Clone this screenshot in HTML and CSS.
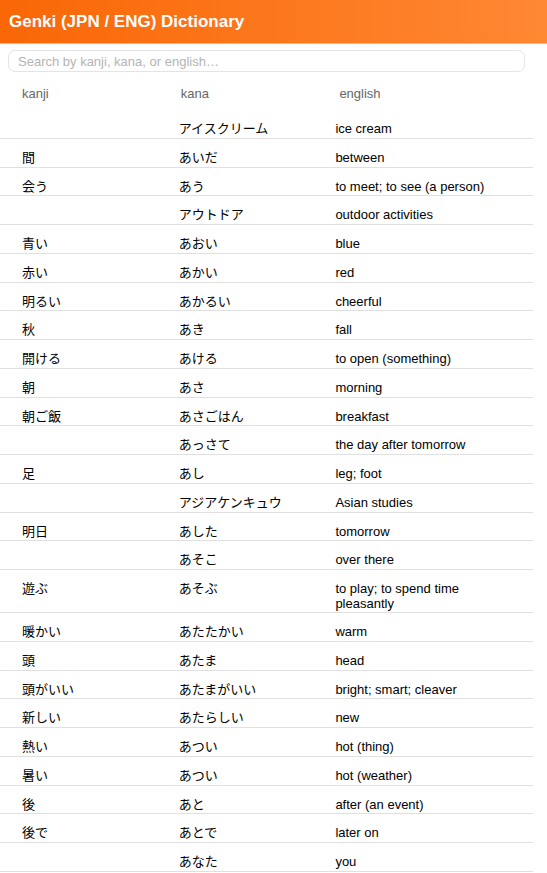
FILE: index.html
```html
<!DOCTYPE html>
<html lang="en">
<head>
<meta charset="utf-8">
<meta name="viewport" content="width=device-width, initial-scale=1">
<title>Genki (JPN / ENG) Dictionary</title>
<link rel="stylesheet" href="styles.css">
</head>
<body>
<header class="bar"><h1 class="title">Genki (JPN / ENG) Dictionary</h1></header>
<main>
<form class="search" role="search">
<input class="search-box" type="search" aria-label="Search the dictionary" placeholder="Search by kanji, kana, or english…">
</form>
<table class="words">
<thead>
<tr><th scope="col">kanji</th><th scope="col">kana</th><th scope="col">english</th></tr>
</thead>
<tbody>
<tr><td lang="ja"></td><td lang="ja">アイスクリーム</td><td>ice cream</td></tr>
<tr><td lang="ja">間</td><td lang="ja">あいだ</td><td>between</td></tr>
<tr><td lang="ja">会う</td><td lang="ja">あう</td><td>to meet; to see (a person)</td></tr>
<tr><td lang="ja"></td><td lang="ja">アウトドア</td><td>outdoor activities</td></tr>
<tr><td lang="ja">青い</td><td lang="ja">あおい</td><td>blue</td></tr>
<tr><td lang="ja">赤い</td><td lang="ja">あかい</td><td>red</td></tr>
<tr><td lang="ja">明るい</td><td lang="ja">あかるい</td><td>cheerful</td></tr>
<tr><td lang="ja">秋</td><td lang="ja">あき</td><td>fall</td></tr>
<tr><td lang="ja">開ける</td><td lang="ja">あける</td><td>to open (something)</td></tr>
<tr><td lang="ja">朝</td><td lang="ja">あさ</td><td>morning</td></tr>
<tr><td lang="ja">朝ご飯</td><td lang="ja">あさごはん</td><td>breakfast</td></tr>
<tr><td lang="ja"></td><td lang="ja">あっさて</td><td>the day after tomorrow</td></tr>
<tr><td lang="ja">足</td><td lang="ja">あし</td><td>leg; foot</td></tr>
<tr><td lang="ja"></td><td lang="ja">アジアケンキュウ</td><td>Asian studies</td></tr>
<tr><td lang="ja">明日</td><td lang="ja">あした</td><td>tomorrow</td></tr>
<tr><td lang="ja"></td><td lang="ja">あそこ</td><td>over there</td></tr>
<tr><td lang="ja">遊ぶ</td><td lang="ja">あそぶ</td><td>to play; to spend time pleasantly</td></tr>
<tr><td lang="ja">暖かい</td><td lang="ja">あたたかい</td><td>warm</td></tr>
<tr><td lang="ja">頭</td><td lang="ja">あたま</td><td>head</td></tr>
<tr><td lang="ja">頭がいい</td><td lang="ja">あたまがいい</td><td>bright; smart; cleaver</td></tr>
<tr><td lang="ja">新しい</td><td lang="ja">あたらしい</td><td>new</td></tr>
<tr><td lang="ja">熱い</td><td lang="ja">あつい</td><td>hot (thing)</td></tr>
<tr><td lang="ja">暑い</td><td lang="ja">あつい</td><td>hot (weather)</td></tr>
<tr><td lang="ja">後</td><td lang="ja">あと</td><td>after (an event)</td></tr>
<tr><td lang="ja">後で</td><td lang="ja">あとで</td><td>later on</td></tr>
<tr><td lang="ja"></td><td lang="ja">あなた</td><td>you</td></tr>
</tbody>
</table>
</main>
</body>
</html>
```
FILE: styles.css
```css
* {
  box-sizing: border-box;
}

body {
  margin: 0;
  background: #fff;
  color: #000;
  font-family: "Liberation Sans", "Noto Sans CJK JP", sans-serif;
  font-size: 13px;
}

.bar {
  padding: 11px 9px;
  background: linear-gradient(to right, #f96706, #ff8833);
  border-bottom: 1px solid #ffb380;
}

.title {
  margin: 0;
  color: #fff;
  font-size: 17px;
  line-height: 21px;
}

.search {
  padding: 6px 22px 0 8px;
}

.search-box {
  display: block;
  width: 100%;
  height: 22px;
  padding: 0 9px;
  border: 1px solid #e4e4e4;
  border-radius: 7px;
  outline: none;
  background: #fff;
  color: #000;
  font: inherit;
  appearance: none;
}

.search-box::placeholder {
  color: #b4b4b4;
}

.words {
  width: calc(100% - 14px);
  table-layout: fixed;
  border-spacing: 0;
}

th {
  padding: 14px 0 9px 22px;
  color: #666;
  font-weight: normal;
  line-height: 15px;
  text-align: left;
}

th:nth-child(2) {
  padding-left: 24px;
}

th:nth-child(3) {
  padding-left: 26px;
}

th:nth-child(-n+2) {
  width: 29.4%;
}

td {
  padding: 11px 0 0 22px;
  border-bottom: 1px solid #e0e0e0;
  line-height: 1.15;
  vertical-align: baseline;
}

td:lang(ja) {
  line-height: 1.29;
}

td:nth-child(3) {
  padding-right: 40px;
}
```
